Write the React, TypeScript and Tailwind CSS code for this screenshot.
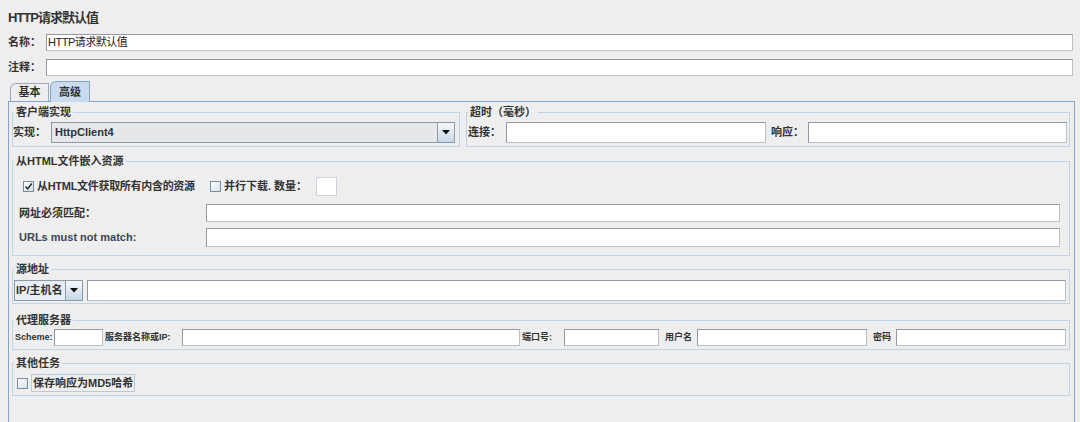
import React from "react";

const inputCls =
  "bg-white border border-[#b9c0c8] border-t-[#8f98a3] border-l-[#8f98a3]";

function Check({ checked }: { checked?: boolean }) {
  return (
    <span className="w-[11px] h-[11px] shrink-0 border border-[#7c8da2] bg-linear-to-br from-white to-[#d3dfeb] flex items-center justify-center">
      {checked && (
        <svg width="9" height="9" viewBox="0 0 9 9">
          <path d="M1.5 4.5 L3.6 7 L7.8 1.5" fill="none" stroke="#222" strokeWidth="1.4" />
        </svg>
      )}
    </span>
  );
}

function Arrow() {
  return (
    <svg width="8" height="5" viewBox="0 0 8 5">
      <polygon points="0,0 8,0 4,4.5" fill="#111" />
    </svg>
  );
}

function Group({
  title,
  className,
  children,
}: {
  title: string;
  className?: string;
  children: React.ReactNode;
}) {
  return (
    <fieldset className={"border border-[#c2d3e5] min-w-0 " + (className ?? "")}>
      <legend className="ml-[1px] px-[2px] text-[11px] leading-[14px] font-bold text-[#333]">
        {title}
      </legend>
      {children}
    </fieldset>
  );
}

export default function App() {
  return (
    <div className="w-[1080px] h-[422px] overflow-hidden bg-[#eeeeee] flex flex-col text-[#333] font-['Liberation_Sans','Noto_Sans_CJK_SC',sans-serif]">
      {/* title */}
      <div className="h-[34px] pt-[9px] pl-[8px] text-[13px] leading-[17px] font-bold tracking-[-1px] text-[#333]">
        HTTP请求默认值
      </div>
      {/* name */}
      <div className="h-[17px] flex items-center pl-[8px] pr-[7px]">
        <span className="w-[38px] text-[11px] font-bold">名称：</span>
        <div className={inputCls + " flex-1 h-[17px] flex items-center px-[1px] text-[11px] leading-none tracking-[-0.5px] text-[#222]"}>
          HTTP请求默认值
        </div>
      </div>
      {/* comment */}
      <div className="h-[17px] mt-[8px] flex items-center pl-[8px] pr-[7px]">
        <span className="w-[38px] text-[11px] font-bold">注释：</span>
        <div className={inputCls + " flex-1 h-[17px]"} />
      </div>
      {/* tabs */}
      <div className="h-[20px] mt-[5px] flex items-end pl-[10px]">
        <div className="w-[39px] h-[18px] border border-b-0 border-[#9ba9b9] rounded-tl-[6px] bg-[#eeeeee] flex items-center justify-center text-[11px] font-bold">
          基本
        </div>
        <div className="relative z-10 -mb-[1px] ml-[1px] w-[40px] h-[21px] border border-b-0 border-[#86a3c9] rounded-tl-[6px] bg-[#c9dcef] flex items-center justify-center text-[11px] font-bold">
          高级
        </div>
      </div>
      {/* panel */}
      <div className="flex-1 ml-[8px] w-[1067px] border border-b-0 border-[#86a3c9] pt-[3px] pl-[3px] pr-[4px] flex flex-col">
        {/* row 1 */}
        <div className="flex">
          <Group title="客户端实现" className="w-[448px] pb-[3px]">
            <div className="mt-[3px] flex items-center pr-[3px]">
              <span className="w-[38px] text-[11px] font-bold">实现：</span>
              <div className="w-[404px] h-[21px] border border-[#8c99a9] bg-[#e6e7e9] flex items-center">
                <span className="flex-1 pl-[3px] text-[11px] font-bold text-[#2b3444]">HttpClient4</span>
                <span className="w-[17px] h-full border-l border-[#8c99a9] bg-linear-to-b from-[#f6f9fc] to-[#c8d7e7] flex items-center justify-center">
                  <Arrow />
                </span>
              </div>
            </div>
          </Group>
          <Group title="超时（毫秒）" className="ml-[6px] flex-1 pb-[3px]">
            <div className="mt-[3px] flex items-center pl-[1px] pr-[2px]">
              <span className="w-[38px] text-[11px] font-bold">连接：</span>
              <div className={inputCls + " w-[260px] h-[21px]"} />
              <span className="ml-[5px] w-[37px] text-[11px] font-bold">响应：</span>
              <div className={inputCls + " flex-1 h-[21px]"} />
            </div>
          </Group>
        </div>
        {/* row 2 */}
        <Group title="从HTML文件嵌入资源" className="mt-[7px] pb-[8px]">
          <div className="mt-[9px] h-[19px] flex items-center pl-[10px]">
            <div className="w-[187px] flex items-center">
              <Check checked />
              <span className="ml-[3px] text-[11px] font-bold whitespace-nowrap tracking-[-0.3px]">从HTML文件获取所有内含的资源</span>
            </div>
            <div className="w-[106px] flex items-center">
              <Check />
              <span className="ml-[3px] text-[11px] font-bold whitespace-nowrap">并行下载. 数量：</span>
            </div>
            <div className="w-[21px] h-[19px] bg-white border border-[#c9d4e0]" />
          </div>
          <div className="mt-[8px] h-[18px] flex items-center pl-[6px] pr-[9px]">
            <span className="w-[187px] text-[11px] font-bold">网址必须匹配：</span>
            <div className={inputCls + " flex-1 h-[18px]"} />
          </div>
          <div className="mt-[6px] h-[19px] flex items-center pl-[6px] pr-[9px]">
            <span className="w-[187px] text-[11px] font-bold text-[#3a4659]">URLs must not match:</span>
            <div className={inputCls + " flex-1 h-[19px]"} />
          </div>
        </Group>
        {/* row 3 */}
        <Group title="源地址" className="mt-[6px] pb-[2px]">
          <div className="mt-[4px] h-[21px] flex items-stretch pl-[1px] pr-[3px]">
            <div className="w-[52px] border border-[#8c99a9] bg-[#e9eef4] flex items-center pl-[1px] text-[11px] font-bold whitespace-nowrap">
              IP/主机名
            </div>
            <div className="w-[17px] border border-l-0 border-[#8c99a9] bg-linear-to-b from-[#f6f9fc] to-[#c8d7e7] flex items-center justify-center">
              <Arrow />
            </div>
            <div className={inputCls + " ml-[4px] flex-1"} />
          </div>
        </Group>
        {/* row 4 */}
        <Group title="代理服务器" className="mt-[9px] pb-[3px]">
          <div className="mt-[2px] h-[17px] flex items-center pl-[2px] pr-[3px] text-[9px] font-bold whitespace-nowrap">
            <span className="w-[39px]">Scheme:</span>
            <div className={inputCls + " w-[49px] h-[17px]"} />
            <span className="ml-[2px] w-[77px]">服务器名称或IP:</span>
            <div className={inputCls + " w-[338px] h-[17px]"} />
            <span className="ml-[2px] w-[42px]">端口号:</span>
            <div className={inputCls + " w-[95px] h-[17px]"} />
            <span className="ml-[6px] w-[32px]">用户名</span>
            <div className={inputCls + " w-[170px] h-[17px]"} />
            <span className="ml-[6px] w-[23px]">密码</span>
            <div className={inputCls + " flex-1 h-[17px]"} />
          </div>
        </Group>
        {/* row 5 */}
        <Group title="其他任务" className="mt-[6px] pb-[3px]">
          <div className="mt-[4px] h-[18px] flex items-center pl-[4px]">
            <Check />
            <span className="ml-[3px] h-[18px] px-[1px] border border-[#b9c9db] flex items-center text-[11px] font-bold whitespace-nowrap">
              保存响应为MD5哈希
            </span>
          </div>
        </Group>
      </div>
    </div>
  );
}
